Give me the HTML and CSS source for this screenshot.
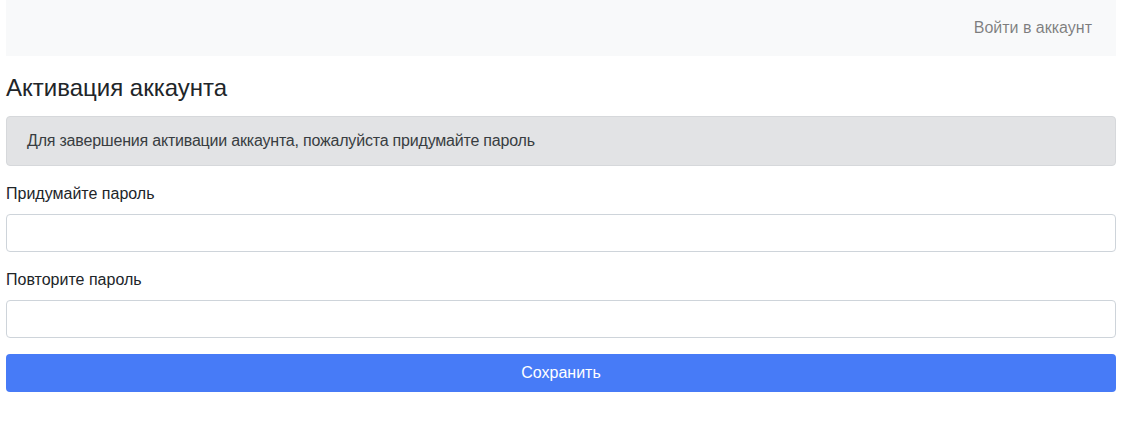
FILE: index.html
```html
<!DOCTYPE html>
<html lang="ru">
<head>
<meta charset="utf-8">
<title>Активация аккаунта</title>
<link rel="stylesheet" href="styles.css">
</head>
<body>
<div class="container">
  <nav class="navbar">
    <a class="nav-link" href="#">Войти в аккаунт</a>
  </nav>
  <h4 class="title">Активация аккаунта</h4>
  <div class="alert">Для завершения активации аккаунта, пожалуйста придумайте пароль</div>
  <form class="form">
    <div class="group">
      <label class="label" for="p1">Придумайте пароль</label>
      <input class="input" id="p1" type="password">
    </div>
    <div class="group">
      <label class="label" for="p2">Повторите пароль</label>
      <input class="input" id="p2" type="password">
    </div>
    <button class="btn" type="button">Сохранить</button>
  </form>
</div>
</body>
</html>
```
FILE: styles.css
```css
* { box-sizing: border-box; }
body {
  margin: 0;
  font-family: "Liberation Sans", Arial, sans-serif;
  font-size: 16px;
  line-height: 1.5;
  color: #212529;
  background: #fff;
}
.container {
  width: 1110px;
  margin-left: 6px;
}
.navbar {
  display: flex;
  justify-content: flex-end;
  align-items: center;
  height: 56px;
  padding: 8px 16px;
  background: #f8f9fa;
}
.nav-link {
  padding: 8px;
  font-size: 16px;
  color: rgba(0,0,0,.5);
  text-decoration: none;
}
.title {
  margin: 18px 0 13px;
  font-size: 24px;
  font-weight: 400;
  line-height: 1.2;
  color: #212529;
}
.alert {
  padding: 12px 20px;
  background: #e2e3e5;
  border: 1px solid #d6d8db;
  border-radius: 4px;
  color: #383d41;
  font-size: 16px;
  line-height: 24px;
  letter-spacing: -0.2px;
  margin-bottom: 16px;
}
.form { display: flex; flex-direction: column; }
.group { display: flex; flex-direction: column; margin-bottom: 16px; }
.label { margin-bottom: 8px; font-size: 16px; line-height: 24px; }
.input {
  height: 38px;
  border: 1px solid #ced4da;
  border-radius: 4px;
  background: #fff;
  font: inherit;
  padding: 6px 12px;
}
.btn {
  height: 38px;
  border: none;
  border-radius: 4px;
  background: #477bf7;
  color: #fff;
  font-family: inherit;
  font-size: 16px;
}
```
